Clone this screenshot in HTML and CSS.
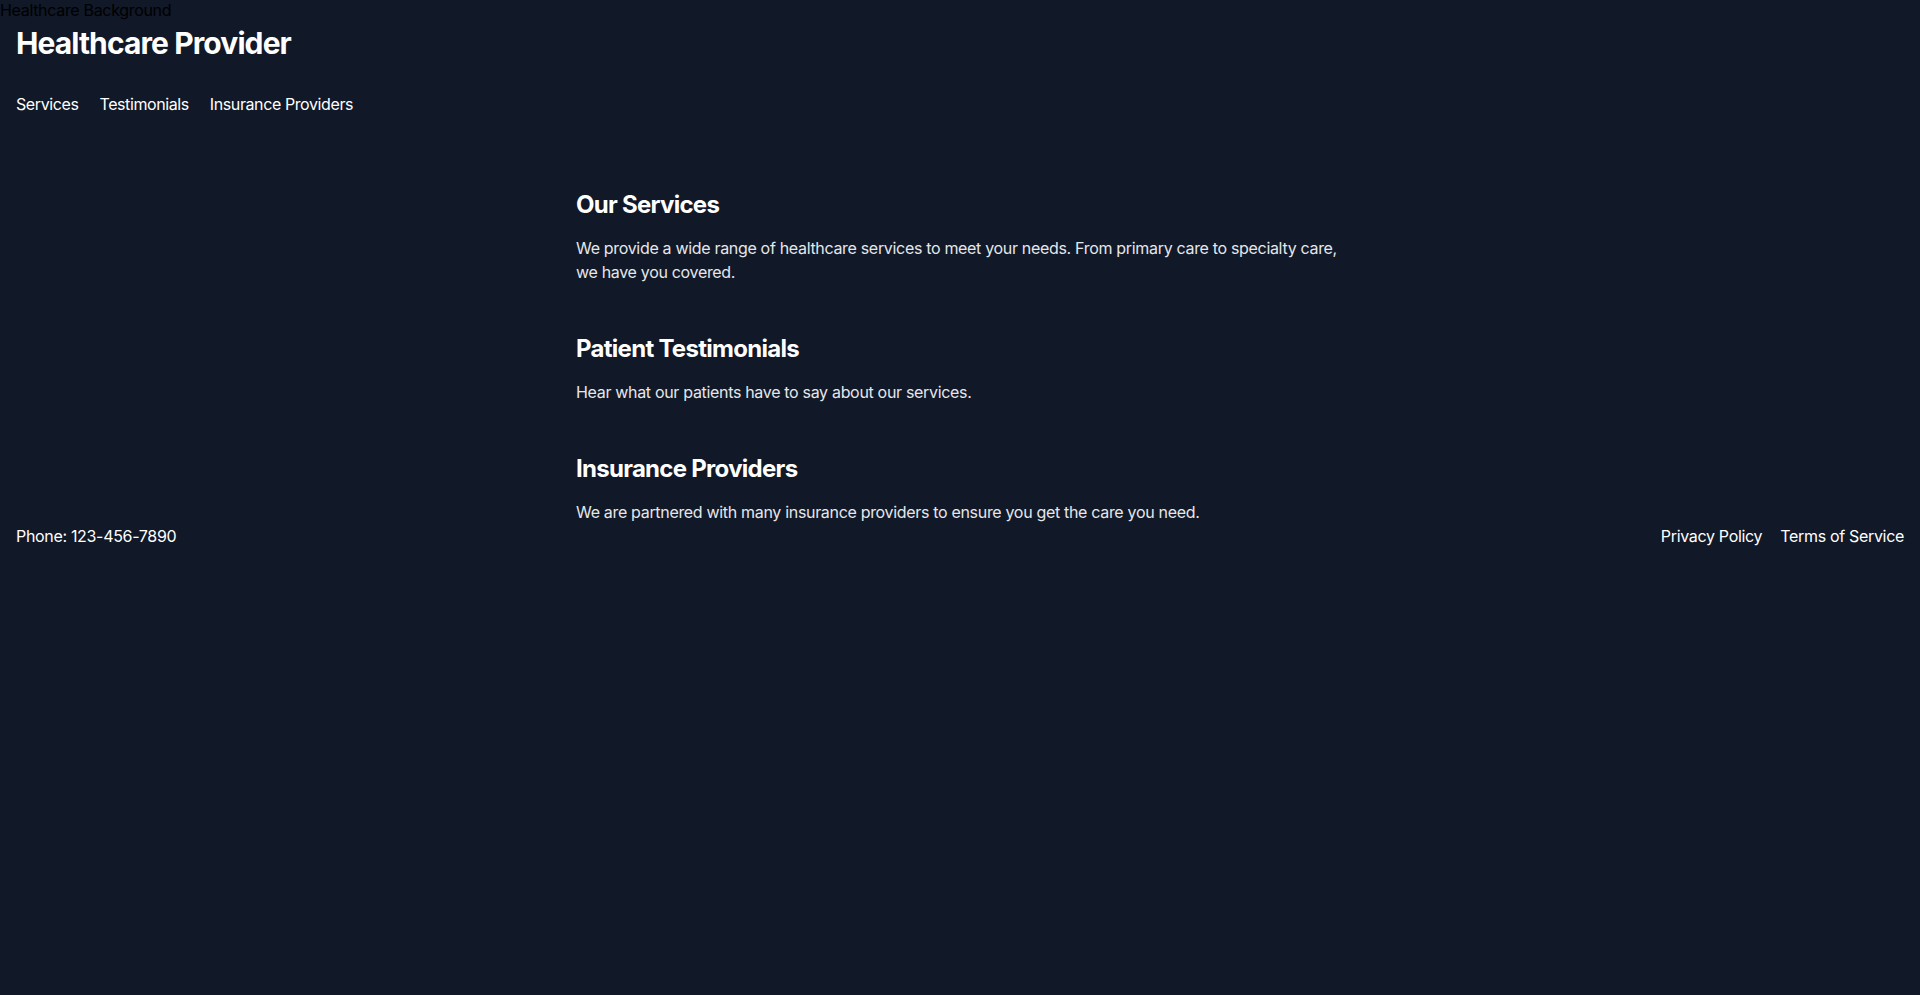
FILE: index.html
```html
<!DOCTYPE html>
<html lang="en">
<head>
<meta charset="utf-8">
<title>Healthcare Provider</title>
<link rel="stylesheet" href="styles.css">
</head>
<body>
<div class="page">
  <span class="bg-alt">Healthcare Background</span>
  <header class="site-header">
    <h1 class="brand">Healthcare Provider</h1>
    <nav class="nav">
      <a href="#services">Services</a>
      <a href="#testimonials">Testimonials</a>
      <a href="#insurance">Insurance Providers</a>
    </nav>
  </header>
  <main class="content">
    <section class="block" id="services">
      <h2>Our Services</h2>
      <p>We provide a wide range of healthcare services to meet your needs. From primary care to specialty care, we have you covered.</p>
    </section>
    <section class="block" id="testimonials">
      <h2>Patient Testimonials</h2>
      <p>Hear what our patients have to say about our services.</p>
    </section>
    <section class="block" id="insurance">
      <h2>Insurance Providers</h2>
      <p>We are partnered with many insurance providers to ensure you get the care you need.</p>
    </section>
  </main>
  <footer class="site-footer">
    <span>Phone: 123-456-7890</span>
    <div class="footer-links">
      <a href="#">Privacy Policy</a>
      <a href="#">Terms of Service</a>
    </div>
  </footer>
</div>
</body>
</html>
```
FILE: styles.css
```css
html, body {
  margin: 0;
  padding: 0;
}
body {
  background: #111827;
  color: #ffffff;
  font-family: Inter, "Noto Sans", sans-serif;
  font-size: 16px;
  line-height: 24px;
  letter-spacing: -0.02em;
  min-height: 995px;
}
.page {
  position: relative;
}
.bg-alt {
  position: absolute;
  left: 0;
  top: 0;
  color: #000000;
  line-height: normal;
  letter-spacing: -0.02em;
}
.site-header {
  padding: 25px 16px 16px;
}
.brand {
  margin: 0;
  font-size: 30px;
  line-height: 36px;
  font-weight: 700;
  letter-spacing: -0.03em;
}
.nav {
  display: flex;
  gap: 21px;
  margin-top: 31px;
  letter-spacing: -0.025em;
}
.nav a, .footer-links a {
  color: #ffffff;
  text-decoration: none;
}
.content {
  max-width: 768px;
  margin: 0 auto;
  padding-top: 56px;
  display: flex;
  flex-direction: column;
  gap: 48px;
}
.block h2 {
  margin: 0 0 15px;
  padding-top: 1px;
  font-size: 24px;
  line-height: 32px;
  font-weight: 700;
  letter-spacing: -0.03em;
}
.block p {
  margin: 0;
  color: #e5e7eb;
}
.site-footer {
  display: flex;
  justify-content: space-between;
  padding: 0 16px;
}
.footer-links {
  display: flex;
  gap: 18px;
}
```
